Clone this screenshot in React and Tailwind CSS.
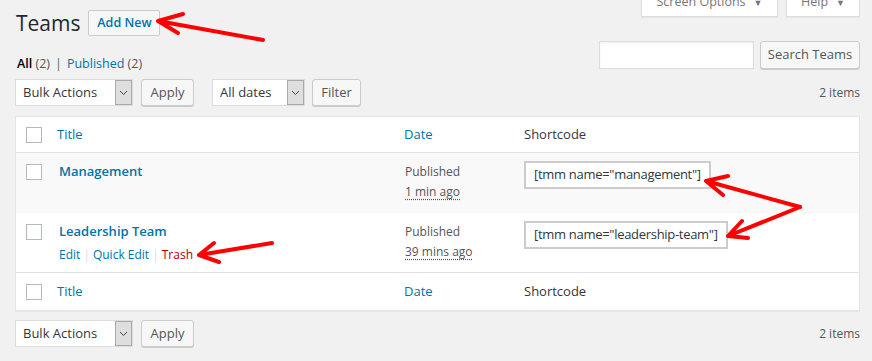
const Chevron = () => (
  <svg width="9" height="6" viewBox="0 0 9 6" className="block">
    <path d="M1 1 L4.5 4.5 L8 1" fill="none" stroke="#444" strokeWidth="1" />
  </svg>
);

function Select({ label, w }) {
  return (
    <div className={`flex h-[27px] border border-[#ddd] bg-white ${w}`}>
      <div className="flex-1 flex items-center pl-[7px] text-[13px] text-[#32373c]">{label}</div>
      <div className="w-[17px] bg-[#dedede] border border-[#a9a9a9] flex items-center justify-center">
        <Chevron />
      </div>
    </div>
  );
}

function Btn({ children, w }) {
  return (
    <button className={`h-[27px] ${w} border border-[#ccc] rounded-[3px] bg-[#f7f7f7] shadow-[0_1px_0_#ccc] text-[13px] text-[#555] flex items-center justify-center`}>
      {children}
    </button>
  );
}

function Check({ className = "" }) {
  return <div className={`w-[16px] h-[16px] border border-[#b4b9be] bg-white ${className}`} />;
}

function Tab({ children, w }) {
  return (
    <div className={`${w} h-[28px] bg-white border border-t-0 border-[#ddd] shadow-[0_1px_1px_rgba(0,0,0,0.04)] flex items-center justify-center gap-[8px] text-[12.5px] text-[#72777c]`}>
      {children}
      <span className="text-[9px] text-[#72777c]">▼</span>
    </div>
  );
}

function Row3({ bottom }) {
  return (
    <div className="flex items-center h-[27px] pl-[15px] pr-[12px]">
      <Select label="Bulk Actions" w="w-[118px]" />
      <div className="ml-[8px]"><Btn w="w-[53px]">Apply</Btn></div>
      {!bottom && (
        <>
          <div className="ml-[18px]"><Select label="All dates" w="w-[93px]" /></div>
          <div className="ml-[7px]"><Btn w="w-[49px]">Filter</Btn></div>
        </>
      )}
      <div className="ml-auto pt-[1px] text-[12px] text-[#555]">2 items</div>
    </div>
  );
}

export default function App() {
  return (
    <div className="relative w-[872px] h-[361px] overflow-hidden bg-[#f1f1f1] font-['Open_Sans',sans-serif] text-[12px] text-[#444]">
      <div className="flex justify-between items-start h-[41px]">
        <div className="flex items-center pl-[16px] pt-[10px] gap-[8px]">
          <h1 className="text-[21px] leading-[26px] text-[#23282d]">Teams</h1>
          <button className="h-[26px] w-[72px] border border-[#ccc] rounded-[2px] bg-[#f7f7f7] text-[#0073aa] text-[12.5px] font-semibold flex items-center justify-center">
            Add New
          </button>
        </div>
        <div className="flex gap-[8px] pr-[12px] -mt-[11px]">
          <Tab w="w-[137px]">Screen Options</Tab>
          <Tab w="w-[74px]">Help</Tab>
        </div>
      </div>

      <div className="flex justify-between items-start h-[28px] pl-[17px] pr-[12px]">
        <div className="mt-[13px] text-[12.5px] leading-[20px] flex items-center gap-[5px]">
          <span><span className="text-[#000] font-semibold">All</span> <span className="text-[#555]">(2)</span></span>
          <span className="text-[#666]">|</span>
          <span><span className="text-[#0073aa]">Published</span> <span className="text-[#555]">(2)</span></span>
        </div>
        <div className="flex items-center gap-[6px]">
          <div className="w-[155px] h-[28px] bg-white border border-[#ddd] shadow-[inset_0_1px_2px_rgba(0,0,0,0.07)]" />
          <Btn w="w-[100px] h-[28px]">Search Teams</Btn>
        </div>
      </div>

      <div className="mt-[10px]">
        <Row3 />
      </div>

      <div className="mt-[10px] ml-[15px] mr-[12px] bg-white border border-[#e5e5e5] shadow-[0_1px_1px_rgba(0,0,0,0.04)]">
        <div className="flex items-center h-[36px] border-b border-[#e1e1e1]">
          <div className="w-[34px] pl-[10px]"><Check /></div>
          <div className="w-[343px] pl-[7px] text-[13px] text-[#0073aa]">Title</div>
          <div className="w-[120px] pl-[11px] text-[13px] text-[#0073aa]">Date</div>
          <div className="flex-1 pl-[11px] text-[13px] text-[#32373c]">Shortcode</div>
        </div>

        <div className="flex items-start h-[60px] bg-[#f9f9f9] pt-[8px]">
          <div className="w-[34px] pl-[10px] pt-[3px]"><Check /></div>
          <div className="w-[343px] pl-[9px] text-[13px] leading-[20px] font-semibold text-[#0073aa]">Management</div>
          <div className="w-[120px] pl-[12px] pt-[1px] text-[12px] leading-[20px] text-[#555]">
            <div>Published</div>
            <div><span className="underline decoration-dotted underline-offset-[3px]">1 min ago</span></div>
          </div>
          <div className="flex-1 pl-[11px]">
            <div className="inline-flex items-center h-[28px] px-[8px] border-2 border-[#ccc] bg-white text-[13px] tracking-[-0.3px] text-[#32373c]">[tmm name="management"]</div>
          </div>
        </div>

        <div className="flex items-start h-[60px] pt-[8px] border-b border-[#e1e1e1]">
          <div className="w-[34px] pl-[10px] pt-[3px]"><Check /></div>
          <div className="w-[343px] pl-[9px] leading-[20px]">
            <div className="text-[13px] font-semibold text-[#0073aa]">Leadership Team</div>
            <div className="mt-[4px] text-[12px] flex items-center gap-[3px]">
              <span className="text-[#0073aa]">Edit</span>
              <span className="text-[#ddd]">|</span>
              <span className="text-[#0073aa]">Quick Edit</span>
              <span className="text-[#ddd]">|</span>
              <span className="text-[#a00]">Trash</span>
            </div>
          </div>
          <div className="w-[120px] pl-[12px] pt-[1px] text-[12px] leading-[20px] text-[#555]">
            <div>Published</div>
            <div><span className="underline decoration-dotted underline-offset-[3px]">39 mins ago</span></div>
          </div>
          <div className="flex-1 pl-[11px]">
            <div className="inline-flex items-center h-[28px] px-[8px] border-2 border-[#ccc] bg-white text-[13px] tracking-[-0.3px] text-[#32373c]">[tmm name="leadership-team"]</div>
          </div>
        </div>

        <div className="flex items-center h-[37px]">
          <div className="w-[34px] pl-[10px]"><Check /></div>
          <div className="w-[343px] pl-[7px] text-[13px] text-[#0073aa]">Title</div>
          <div className="w-[120px] pl-[11px] text-[13px] text-[#0073aa]">Date</div>
          <div className="flex-1 pl-[11px] text-[13px] text-[#32373c]">Shortcode</div>
        </div>
      </div>

      <div className="mt-[9px]">
        <Row3 bottom />
      </div>

      <svg className="absolute inset-0 pointer-events-none" width="872" height="361" viewBox="0 0 872 361">
        <g fill="none" stroke="#ff0000" strokeWidth="4" strokeLinecap="round" strokeLinejoin="round">
          <path d="M263 40 L158 21 M183 14 L158 21 L178 33" />
          <path d="M272 243 L199 255 M214 243 L199 255 L219 262" />
          <path d="M800 207 L706 181 M728 176 L706 181 L723 195" />
          <path d="M800 207 L728 236 M742 221 L728 236 L748 238" />
        </g>
      </svg>
    </div>
  );
}
